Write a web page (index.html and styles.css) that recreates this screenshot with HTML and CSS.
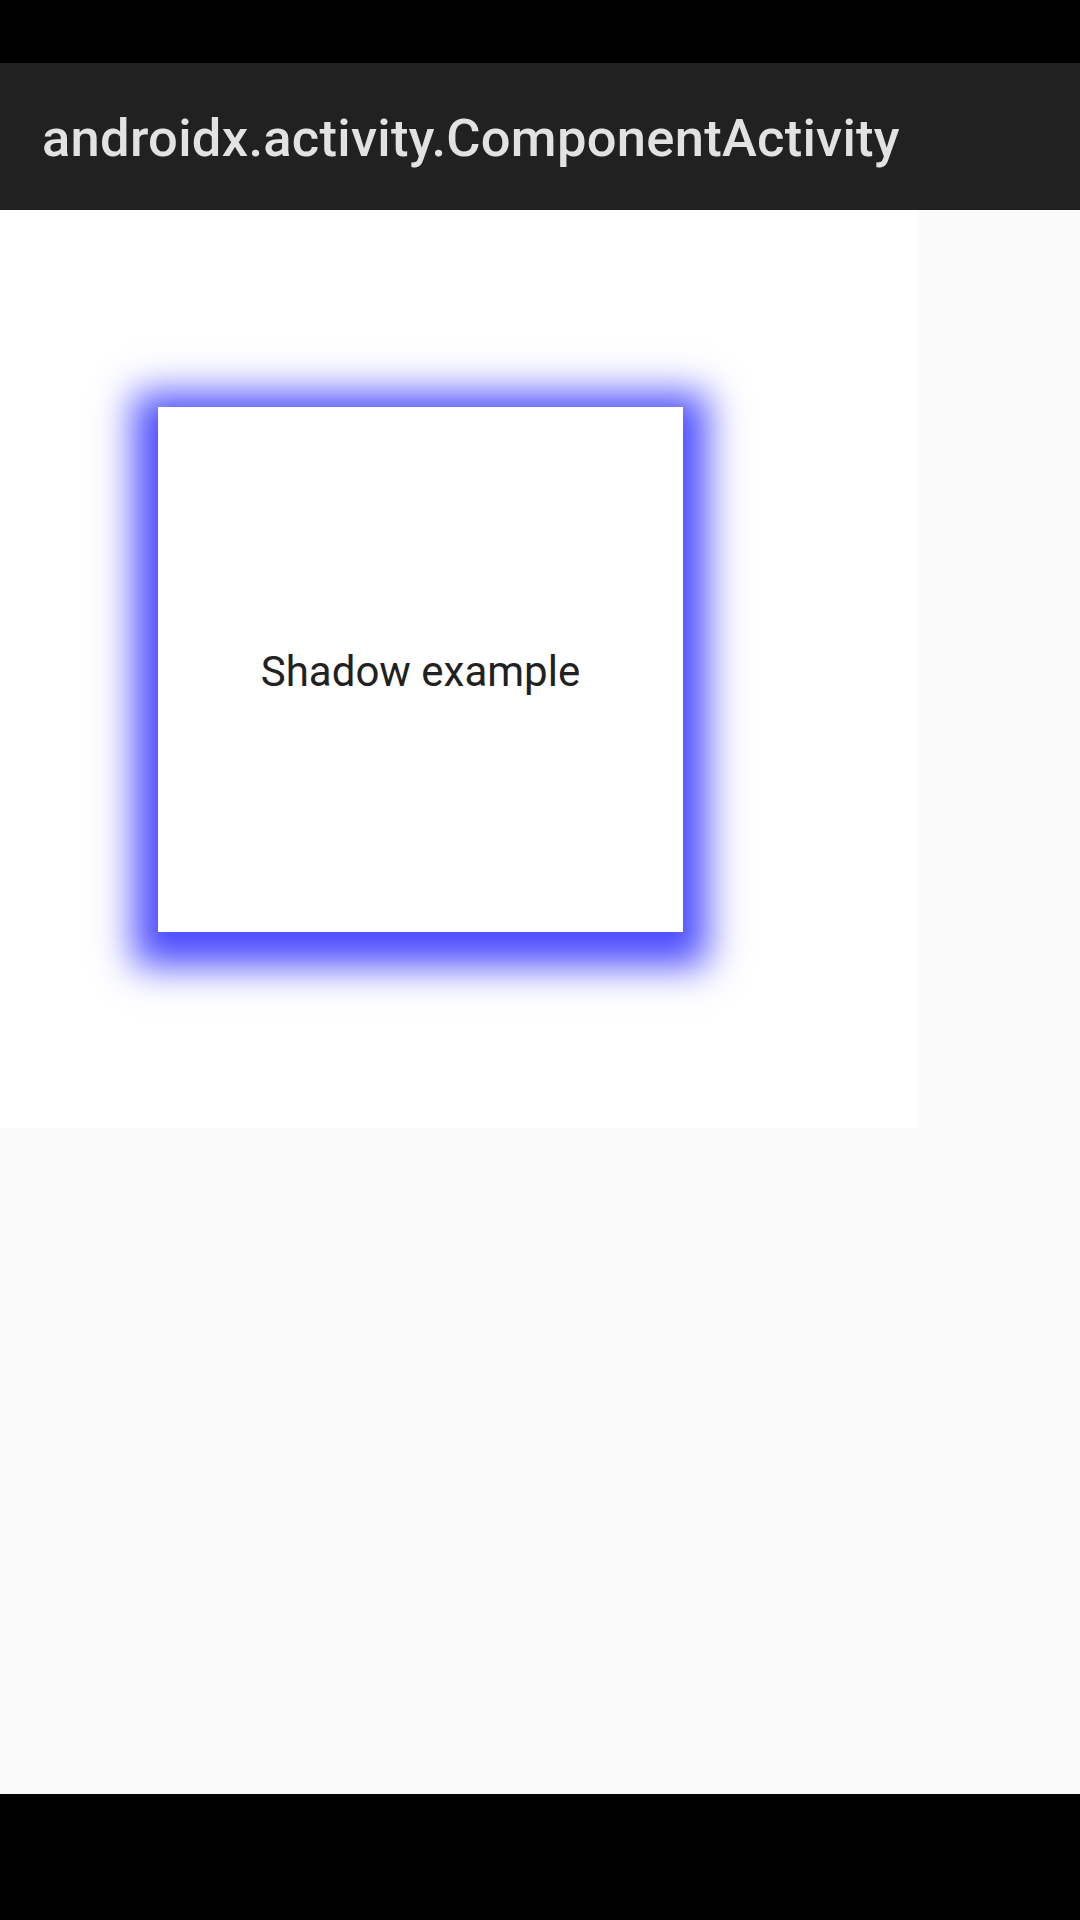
FILE: index.html
```html
<!DOCTYPE html>
<html>
<head>
<meta charset="utf-8">
<link rel="stylesheet" href="styles.css">
</head>
<body>
<div class="screen">
  <div class="status-bar"></div>
  <div class="app-bar"><span class="title">androidx.activity.ComponentActivity</span></div>
  <main class="main">
    <div class="canvas">
      <div class="card"><span class="label">Shadow example</span></div>
    </div>
  </main>
  <div class="nav-bar"></div>
</div>
</body>
</html>
```
FILE: styles.css
```css
html, body {
  margin: 0;
  padding: 0;
}
body {
  background: #fafafa;
  font-family: Roboto, "Noto Sans", sans-serif;
}
.screen {
  width: 1080px;
  height: 1920px;
  display: flex;
  flex-direction: column;
  overflow: hidden;
}
.status-bar {
  height: 63px;
  background: #000;
  flex: none;
}
.app-bar {
  height: 147px;
  background: #212121;
  flex: none;
  display: flex;
  align-items: center;
  padding-left: 42px;
}
.title {
  color: #e2e2e2;
  font-size: 52.5px;
  font-weight: 500;
  letter-spacing: 0.28px;
  line-height: 1;
  position: relative;
  top: 2px;
}
.main {
  flex: 1;
  background: #fafafa;
}
.canvas {
  width: 918px;
  height: 918px;
  background: #fff;
  display: flex;
  align-items: center;
}
.card {
  margin-left: 158px;
  width: 525px;
  height: 525px;
  background: #fff;
  display: flex;
  align-items: center;
  justify-content: center;
  box-shadow: 0 10px 36px 24px rgba(76, 76, 255, 1);
}
.label {
  font-size: 42px;
  color: #212121;
  line-height: 1;
  position: relative;
  top: 3px;
}
.nav-bar {
  height: 126px;
  background: #000;
  flex: none;
}
```
